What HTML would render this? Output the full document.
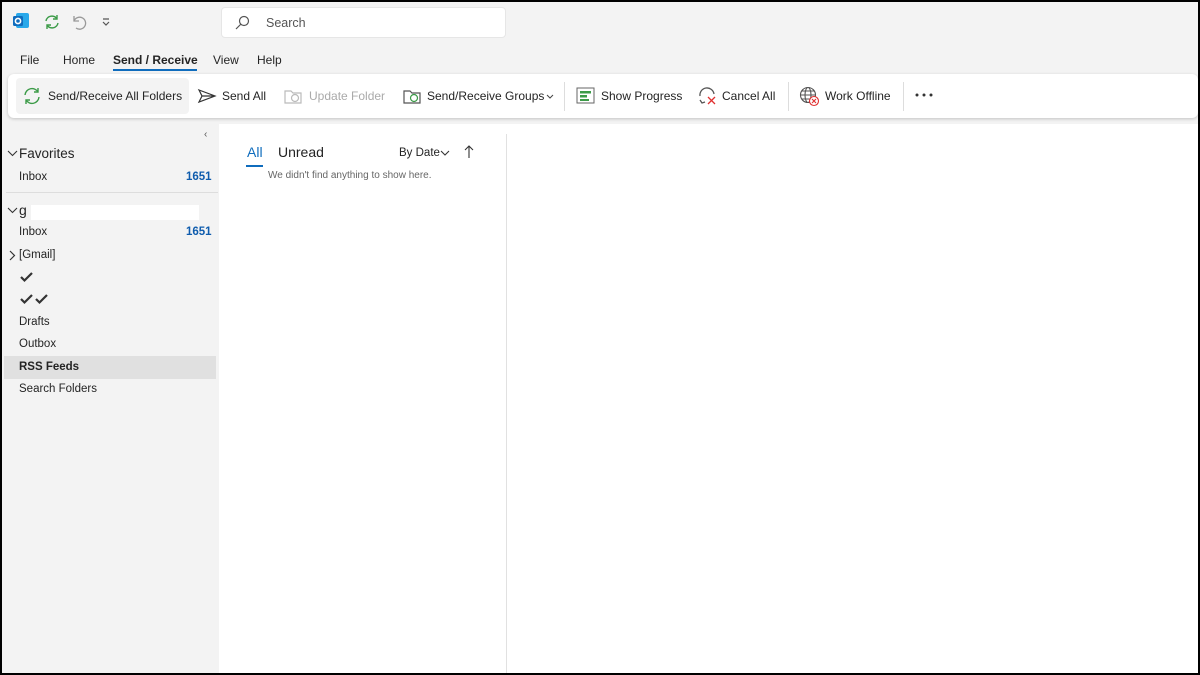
<!DOCTYPE html>
<html><head><meta charset="utf-8"><style>
*{margin:0;padding:0;box-sizing:border-box}
body{width:1200px;height:675px;background:#f3f3f3;font-family:"Liberation Sans",sans-serif;overflow:hidden;position:relative}
#frame{position:absolute;left:0;top:0;width:1200px;height:675px;border:2px solid #000;z-index:10}
.a{position:absolute;white-space:nowrap}
.t{font-size:12px;color:#242424}
.s{font-size:11.5px;color:#242424}
</style></head><body><div id="frame"></div>
<!-- title bar -->
<svg class="a" style="left:12px;top:12px" width="18" height="18"><rect x="4" y="1" width="13" height="15" rx="2" fill="#28a8ea"/><rect x="1" y="4" width="10" height="10" rx="1.5" fill="#0f6cbd"/><circle cx="6" cy="9" r="2.6" fill="none" stroke="#fff" stroke-width="1.6"/></svg>
<svg class="a" style="left:43px;top:13px" width="18" height="18" fill="none" stroke="#3c9b48" stroke-width="1.4"><path d="M3 8a6 6 0 0 1 11-2M15 10a6 6 0 0 1-11 2"/><path d="M14 2v4h-4M4 16v-4h4"/></svg>
<svg class="a" style="left:70px;top:13px" width="18" height="18" fill="none" stroke="#999" stroke-width="1.3"><path d="M4 3v5h5"/><path d="M4 8a6 6 0 1 1 2 7"/></svg>
<svg class="a" style="left:101px;top:17px" width="10" height="10" fill="none" stroke="#555" stroke-width="1.2"><path d="M2 2h6M2 5l3 3 3-3"/></svg>
<div class="a" style="left:221px;top:7px;width:285px;height:31px;background:#fff;border-radius:4px;border:1px solid #e6e6e6"></div>
<svg class="a" style="left:234px;top:15px" width="16" height="16" fill="none" stroke="#555" stroke-width="1.2"><circle cx="10" cy="6" r="4.5"/><path d="M7 9l-5 5"/></svg>
<div class="a t" style="left:266px;top:16px;color:#555;font-size:12.5px">Search</div>
<!-- tabs -->
<div class="a t" style="left:20px;top:53px">File</div>
<div class="a t" style="left:63px;top:53px">Home</div>
<div class="a t" style="left:113px;top:53px;font-weight:bold">Send / Receive</div>
<div class="a" style="left:113px;top:69px;width:84px;height:2px;background:#0f6cbd"></div>
<div class="a t" style="left:213px;top:53px">View</div>
<div class="a t" style="left:257px;top:53px">Help</div>
<!-- ribbon -->
<div class="a" style="left:8px;top:74px;width:1190px;height:44px;background:#fff;border-radius:6px;box-shadow:0 1px 3px rgba(0,0,0,.2)"></div>
<div class="a" style="left:16px;top:78px;width:173px;height:36px;background:#f3f3f3;border-radius:4px"></div>
<svg class="a" style="left:22px;top:86px" width="20" height="20" fill="none" stroke="#3c9b48" stroke-width="1.4"><path d="M3 9a7 7 0 0 1 13-3M17 11a7 7 0 0 1-13 3"/><path d="M16 2v4h-4M4 18v-4h4"/></svg>
<div class="a t" style="left:48px;top:89px">Send/Receive All Folders</div>
<svg class="a" style="left:197px;top:88px" width="20" height="16" fill="none" stroke="#333" stroke-width="1.2"><path d="M2 2l16 6-16 6 3-6zM5 8h13"/></svg>
<div class="a t" style="left:222px;top:89px">Send All</div>
<svg class="a" style="left:283px;top:87px" width="20" height="18" fill="none" stroke="#bbb" stroke-width="1.2"><path d="M2 4h6l2 2h8v10H2z"/><circle cx="12" cy="11" r="3.5"/></svg>
<div class="a t" style="left:309px;top:89px;color:#aaa">Update Folder</div>
<svg class="a" style="left:402px;top:87px" width="20" height="18" fill="none" stroke="#555" stroke-width="1.2"><path d="M2 4h6l2 2h8v10H2z"/><circle cx="12" cy="11" r="3.5" stroke="#3c9b48"/></svg>
<div class="a t" style="left:427px;top:89px">Send/Receive Groups</div>
<svg class="a" style="left:546px;top:94px" width="8" height="6" fill="none" stroke="#444"><path d="M1 1l3 3 3-3"/></svg>
<div class="a" style="left:564px;top:82px;width:1px;height:29px;background:#ddd"></div>
<svg class="a" style="left:576px;top:87px" width="20" height="18"><rect x="1" y="1" width="17" height="15" fill="none" stroke="#666"/><rect x="4" y="4" width="11" height="2.5" fill="#3c9b48"/><rect x="4" y="8" width="7" height="2.5" fill="#3c9b48"/><rect x="4" y="12" width="9" height="2" fill="#3c9b48"/></svg>
<div class="a t" style="left:601px;top:89px">Show Progress</div>
<svg class="a" style="left:697px;top:86px" width="22" height="22" fill="none" stroke-width="1.3"><path d="M3 10a7 7 0 0 1 14-2" stroke="#555"/><path d="M3 14l2 3 3-1" stroke="#555"/><path d="M11 11l7 7M18 11l-7 7" stroke="#e03030"/></svg>
<div class="a t" style="left:722px;top:89px">Cancel All</div>
<div class="a" style="left:788px;top:82px;width:1px;height:29px;background:#ddd"></div>
<svg class="a" style="left:799px;top:86px" width="22" height="22" fill="none" stroke="#555" stroke-width="1.1"><circle cx="9" cy="9" r="7.5"/><ellipse cx="9" cy="9" rx="3" ry="7.5"/><path d="M1.5 9h15M3 5h12M3 13h12"/><circle cx="15" cy="15" r="4.5" fill="#fff" stroke="#e03030"/><path d="M13 13l4 4M17 13l-4 4" stroke="#e03030"/></svg>
<div class="a t" style="left:825px;top:89px">Work Offline</div>
<div class="a" style="left:903px;top:82px;width:1px;height:29px;background:#ddd"></div>
<svg class="a" style="left:914px;top:92px" width="20" height="6" fill="#333"><circle cx="3" cy="3" r="1.5"/><circle cx="10" cy="3" r="1.5"/><circle cx="17" cy="3" r="1.5"/></svg>
<!-- sidebar -->
<div class="a" style="left:204px;top:129px;font-size:10px;color:#555">‹</div>
<svg class="a" style="left:7px;top:150px" width="11" height="8" fill="none" stroke="#333" stroke-width="1.1"><path d="M1 1l4.5 4.5L10 1"/></svg>
<div class="a" style="left:19px;top:146px;font-size:13.5px;color:#242424">Favorites</div>
<div class="a s" style="left:19px;top:171px">Inbox</div>
<div class="a s" style="left:186px;top:171px;color:#0f5cad;font-weight:bold">1651</div>
<div class="a" style="left:6px;top:192px;width:212px;height:1px;background:#ddd"></div>
<svg class="a" style="left:7px;top:207px" width="11" height="8" fill="none" stroke="#333" stroke-width="1.1"><path d="M1 1l4.5 4.5L10 1"/></svg>
<div class="a" style="left:19px;top:202px;font-size:14px;color:#242424">g</div>
<div class="a" style="left:31px;top:205px;width:168px;height:15px;background:#fff"></div>
<div class="a s" style="left:19px;top:226px">Inbox</div>
<div class="a s" style="left:186px;top:226px;color:#0f5cad;font-weight:bold">1651</div>
<svg class="a" style="left:9px;top:250px" width="8" height="11" fill="none" stroke="#333" stroke-width="1.2"><path d="M1 1l4.5 4.5L1 10"/></svg>
<div class="a s" style="left:19px;top:249px">[Gmail]</div>
<svg class="a" style="left:20px;top:271px" width="14" height="12" fill="none" stroke="#333" stroke-width="2.2"><path d="M1 6l3.5 3.5L12 2"/></svg>
<svg class="a" style="left:20px;top:293px" width="30" height="12" fill="none" stroke="#333" stroke-width="2.2"><path d="M1 6l3.5 3.5L12 2M16 6l3.5 3.5L27 2"/></svg>
<div class="a s" style="left:19px;top:316px">Drafts</div>
<div class="a s" style="left:19px;top:338px">Outbox</div>
<div class="a" style="left:4px;top:356px;width:212px;height:23px;background:#e0e0e0"></div>
<div class="a s" style="left:19px;top:361px;font-weight:bold">RSS Feeds</div>
<div class="a s" style="left:19px;top:383px">Search Folders</div>
<!-- list -->
<div class="a" style="left:219px;top:124px;width:979px;height:549px;background:#fff"></div>
<div class="a" style="left:506px;top:134px;width:1px;height:539px;background:#e1e1e1"></div>
<div class="a" style="left:247px;top:144px;font-size:14px;color:#0f6cbd">All</div>
<div class="a" style="left:246px;top:165px;width:17px;height:2px;background:#0f6cbd"></div>
<div class="a" style="left:278px;top:144px;font-size:14px;color:#242424">Unread</div>
<div class="a" style="left:399px;top:147px;font-size:11.5px;color:#242424">By Date</div>
<svg class="a" style="left:440px;top:150px" width="10" height="7" fill="none" stroke="#333" stroke-width="1.1"><path d="M1 1l4 4 4-4"/></svg>
<svg class="a" style="left:464px;top:145px" width="10" height="14" fill="none" stroke="#333" stroke-width="1.1"><path d="M5 13V1M1 5l4-4 4 4"/></svg>
<div class="a" style="left:268px;top:170px;font-size:10px;color:#666">We didn't find anything to show here.</div>
</body></html>
